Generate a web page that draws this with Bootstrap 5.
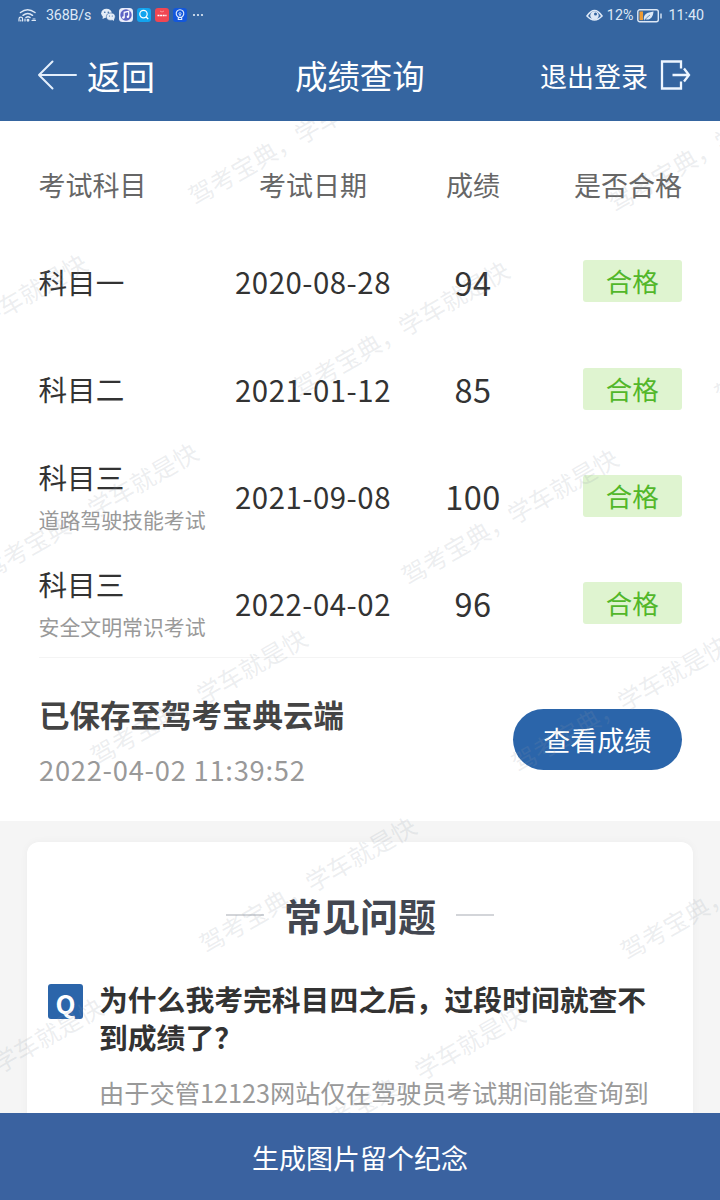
<!DOCTYPE html>
<html lang="zh-CN">
<head>
<meta charset="utf-8">
<meta name="viewport" content="width=device-width, initial-scale=1">
<title>成绩查询</title>
<link href="https://cdn.jsdelivr.net/npm/bootstrap@5.3.0/dist/css/bootstrap.min.css" rel="stylesheet">
<style>
  body { font-family: "Noto Sans CJK SC", sans-serif; color: #333; background: #f5f5f5; }
  .screen { width: 720px; height: 1200px; }
  .top-area { background: #3565a0; height: 121px; }
  .status-bar { height: 30px; font-family: Roboto, sans-serif; font-size: 14.3px; color: #dde8f6; padding: 1px 16px 0 18px; }
  .net-speed { width: 54px; margin-left: 9px; letter-spacing: -.2px; }
  .clock { margin-left: 5px; }
  .title-bar { height: 91px; padding: 0 28px 2px 37px; }
  .back-text { font-size: 34px; line-height: 50px; margin: 2px 0 0 9px; }
  .page-title { font-size: 32.4px; line-height: 50px; left: 295px; top: 20px; }
  .exit-text { font-size: 27px; line-height: 40px; margin: 2px 12px 0 0; }
  .results { height: 700px; padding: 0 38px 0 39px; }
  .grid-row { height: 107.3px; }
  .grid-head { color: #666; padding-top: 21px; }
  .c-subject { width: 177px; }
  .c-date { width: 194px; }
  .c-score { width: 126px; }
  .c-pass { width: 146px; }
  .grid-row .c-subject { font-size: 28.6px; line-height: 42px; }
  .grid-head, .grid-head .c-subject { font-size: 27px; line-height: 42px; }
  .grid-row .c-subject > span, .grid-row .sub-note { margin-left: -.5px; }
  .grid-row .sub-note { font-size: 20.9px; color: #999; }
  .with-note { padding-top: 3px; }
  .date-text { font-size: 29.4px; letter-spacing: .5px; padding-bottom: 1px; }
  .score-text { font-size: 32.5px; letter-spacing: .5px; }
  .pass-tag { width: 99.5px; height: 42px; background: #dff4d0; color: #52b72a; font-size: 26.5px; line-height: 42px; border-radius: 3px; margin-top: -1px; }
  .saved { border-top: 1px solid #f4f4f4; height: 164px; }
  .saved-text { gap: 13px; padding-top: 2px; }
  .saved-title { font-size: 30.5px; font-weight: 700; line-height: 44px; color: #444; }
  .saved-time { font-size: 27.3px; line-height: 40px; color: #999; letter-spacing: .75px; }
  .view-btn { --bs-btn-bg: #2b65aa; --bs-btn-color: #fff; --bs-btn-border-width: 0; width: 169.5px; height: 61px; font-size: 27px; padding: 0; }
  .faq-wrap { padding: 21px 27px 0; height: 292px; }
  .faq-card { height: 320px; border-radius: 12px; box-shadow: 0 0 8px rgba(0,0,0,.04); padding: 47px 21px 0; }
  .faq-title { font-size: 38px; font-weight: 700; line-height: 52px; color: #434751; }
  .faq-head { gap: 20px; }
  .rule { width: 38px; height: 2px; background: #d3d5d9; }
  .faq-item { margin-top: 39px; gap: 16px; }
  .q-mark { width: 35px; height: 35px; border-radius: 3px; background: #2b65aa; font-size: 26px; font-weight: 700; line-height: 37px; margin-top: 4px; }
  .question { font-size: 28.8px; font-weight: 700; line-height: 38px; width: 560px; }
  .answer { font-size: 25.25px; line-height: 36px; color: #999; margin-top: 18px; }
  .footer-btn { height: 87px; background: #3a62a0; color: #fff; font-size: 27px; padding-top: 3px; }
  .marks { left: 0; top: 121px; width: 720px; height: 992px; pointer-events: none; }
</style>
</head>
<body>
<div class="screen position-relative overflow-hidden mx-auto">
  <header class="top-area text-white">
    <div class="status-bar d-flex align-items-center justify-content-between">
      <div class="d-flex align-items-center">
        <svg width="19" height="15" viewBox="0 0 19 15" fill="none" stroke="#dde8f6" stroke-width="1.5" stroke-linecap="round"><path d="M2.500 4.500Q9.500-1 17 4.500M5 7.300Q9.800 3.500 14.500 7.300M8 9.500Q10 8 12 9.500"/><path d="M1 13v-2a1.800 1.800 0 0 1 3.600 0v2M2.800 12v1M7 13v-2" stroke-width="1.200"/><circle cx="10" cy="12.300" r=".7"/><path d="M14 12.500h3.500M15 11h2" stroke-width="1.200"/></svg>
        <span class="net-speed text-nowrap">368B/s</span>
        <svg width="106" height="16" viewBox="100 7.500 106 16">
          <g fill="#e4edf7"><ellipse cx="106.500" cy="12.700" rx="5.300" ry="4.500"/><path d="M103 15.500l-.5 3 3.500-1.500z"/><ellipse cx="110.800" cy="16.200" rx="4.400" ry="3.700" stroke="#3565a0" stroke-width=".6"/><path d="M112 19l2 1.500v-3z"/></g>
          <g fill="#3565a0"><circle cx="104.800" cy="11.700" r=".8"/><circle cx="108.300" cy="11.700" r=".8"/><circle cx="109.500" cy="15.500" r=".6"/><circle cx="112.300" cy="15.500" r=".6"/></g>
          <rect x="119" y="7.500" width="14" height="14" rx="3.500" fill="#e9ecfb"/><circle cx="126" cy="14.500" r="5.700" fill="#5e63c4"/><path d="M124.200 17v-5.200l4.500-1v5.200" fill="none" stroke="#fff" stroke-width="1.200"/><circle cx="123.400" cy="17" r="1.200" fill="#fff"/><circle cx="127.900" cy="16.200" r="1.200" fill="#fff"/>
          <rect x="137" y="7.500" width="14" height="14" rx="3" fill="#12a4ee"/><circle cx="143.500" cy="13.600" r="3.700" fill="none" stroke="#fff" stroke-width="1.200"/><path d="M146.200 16.500l2 2" stroke="#fff" stroke-width="1.300"/>
          <rect x="155" y="7.500" width="14" height="14" rx="3" fill="#f04652"/><path d="M157.500 15h9" stroke="#fff" stroke-width="1.500" stroke-dasharray="2 .6"/><path d="M160 10.500q2 2 4 0" fill="none" stroke="#ffb4b4" stroke-width=".7"/>
          <rect x="173" y="7.500" width="14" height="14" rx="3" fill="#1357dc"/><path d="M178.300 16.500a3.800 3.800 0 1 1 3.400 0v2.500h-3.400zM178.500 17h3M180 14v2" fill="none" stroke="#e5efff" stroke-width="1.100"/><circle cx="180" cy="13.200" r="1.100" fill="none" stroke="#e5efff" stroke-width=".8"/>
          <g fill="#e4edf7"><circle cx="194" cy="14.500" r="1.100"/><circle cx="198" cy="14.500" r="1.100"/><circle cx="202" cy="14.500" r="1.100"/></g>
        </svg>
      </div>
      <div class="d-flex align-items-center">
        <svg width="17" height="13" viewBox="0 0 17 13"><path d="M1 7Q8.500-4 16 7Q8.500 15 1 7z" fill="none" stroke="#dde8f6" stroke-width="1.600"/><circle cx="8.500" cy="6.500" r="4.200" fill="#dde8f6"/><circle cx="9.500" cy="5" r="1.500" fill="#3565a0"/></svg>
        <span class="ms-1">12%</span>
        <svg class="ms-1" width="26" height="14" viewBox="0 0 26 14"><rect x=".8" y=".8" width="20.500" height="12" rx="2" fill="none" stroke="#dde8f6" stroke-width="1.400"/><rect x="2.500" y="2.500" width="3.500" height="8.600" fill="#ee9b35"/><path d="M7 11.500C6 5 10 3.500 16.500 2.500 16 8.500 13 11.500 8.500 10.300z" fill="#dde8f6"/><path d="M7.500 11.300Q10 8 13 6" stroke="#3565a0" stroke-width=".7" fill="none"/><path d="M24 4.500v5" stroke="#dde8f6" stroke-width="1.400"/></svg>
        <span class="clock">11:40</span>
      </div>
    </div>
    <div class="title-bar position-relative d-flex align-items-center justify-content-between">
      <div class="d-flex align-items-center">
        <svg width="41" height="30" viewBox="0 0 41 30" fill="none" stroke="#e4effc" stroke-width="2" stroke-linecap="round" stroke-linejoin="round"><path d="M15.500 1.500L2 15l13.500 13.500M2 15h37"/></svg>
        <span class="back-text">返回</span>
      </div>
      <span class="page-title position-absolute">成绩查询</span>
      <div class="d-flex align-items-center">
        <span class="exit-text">退出登录</span>
        <svg width="32" height="30" viewBox="0.500 0.500 32 30" fill="none" stroke="#eef6ff" stroke-width="2.300"><path d="M21.500 9V2H2.500v27h19v-7M13 15.500h16M24.500 9l5 6.500-5 6.500"/></svg>
      </div>
    </div>
  </header>

  <section class="results bg-white">
    <div class="grid-row grid-head d-flex align-items-center">
      <div class="c-subject"><span>考试科目</span></div><div class="c-date text-center">考试日期</div><div class="c-score text-center">成绩</div><div class="c-pass text-end">是否合格</div>
    </div>
    <div class="grid-row d-flex align-items-center">
      <div class="c-subject"><span>科目一</span></div><div class="c-date date-text text-center">2020-08-28</div><div class="c-score score-text text-center">94</div>
      <div class="c-pass d-flex justify-content-end"><div class="pass-tag text-center">合格</div></div>
    </div>
    <div class="grid-row d-flex align-items-center">
      <div class="c-subject"><span>科目二</span></div><div class="c-date date-text text-center">2021-01-12</div><div class="c-score score-text text-center">85</div>
      <div class="c-pass d-flex justify-content-end"><div class="pass-tag text-center">合格</div></div>
    </div>
    <div class="grid-row d-flex align-items-center">
      <div class="c-subject with-note"><span>科目三</span><div class="sub-note">道路驾驶技能考试</div></div><div class="c-date date-text text-center">2021-09-08</div><div class="c-score score-text text-center">100</div>
      <div class="c-pass d-flex justify-content-end"><div class="pass-tag text-center">合格</div></div>
    </div>
    <div class="grid-row d-flex align-items-center">
      <div class="c-subject with-note"><span>科目三</span><div class="sub-note">安全文明常识考试</div></div><div class="c-date date-text text-center">2022-04-02</div><div class="c-score score-text text-center">96</div>
      <div class="c-pass d-flex justify-content-end"><div class="pass-tag text-center">合格</div></div>
    </div>
    <div class="saved d-flex align-items-center justify-content-between">
      <div class="saved-text d-flex flex-column">
        <div class="saved-title">已保存至驾考宝典云端</div>
        <div class="saved-time">2022-04-02 11:39:52</div>
      </div>
      <button type="button" class="btn view-btn rounded-pill">查看成绩</button>
    </div>
  </section>

  <section class="faq-wrap overflow-hidden">
    <div class="faq-card bg-white">
      <div class="faq-head d-flex align-items-center justify-content-center">
        <span class="rule"></span><h2 class="faq-title mb-0">常见问题</h2><span class="rule"></span>
      </div>
      <div class="faq-item d-flex">
        <div class="q-mark text-white text-center flex-shrink-0">Q</div>
        <div>
          <div class="question">为什么我考完科目四之后，过段时间就查不到成绩了？</div>
          <div class="answer text-nowrap">由于交管12123网站仅在驾驶员考试期间能查询到</div>
        </div>
      </div>
    </div>
  </section>

  <footer class="footer-btn d-flex align-items-center justify-content-center">生成图片留个纪念</footer>

  <svg class="marks position-absolute" viewBox="0 121 720 992" font-family="Noto Sans CJK SC, sans-serif" font-size="24.500" fill="#8c97a4" fill-opacity=".17" aria-hidden="true">
    <defs><text id="wm" x="-7.500" y="7.500">驾考宝典，学车就是快</text></defs>
    <use href="#wm" transform="translate(198 196) rotate(-30)"/>
    <use href="#wm" transform="translate(618 203) rotate(-30)"/>
    <use href="#wm" transform="translate(-120 381) rotate(-30)"/>
    <use href="#wm" transform="translate(302 388) rotate(-30)"/>
    <use href="#wm" transform="translate(724 394) rotate(-30)"/>
    <use href="#wm" transform="translate(-9 570) rotate(-30)"/>
    <use href="#wm" transform="translate(411 576) rotate(-30)"/>
    <use href="#wm" transform="translate(100 756) rotate(-30)"/>
    <use href="#wm" transform="translate(521 763) rotate(-30)"/>
    <use href="#wm" transform="translate(209 944) rotate(-30)"/>
    <use href="#wm" transform="translate(630 951) rotate(-30)"/>
    <use href="#wm" transform="translate(-104 1125) rotate(-30)"/>
    <use href="#wm" transform="translate(318 1132) rotate(-30)"/>
  </svg>
</div>
<script src="https://cdn.jsdelivr.net/npm/bootstrap@5.3.0/dist/js/bootstrap.bundle.min.js"></script>
</body>
</html>
